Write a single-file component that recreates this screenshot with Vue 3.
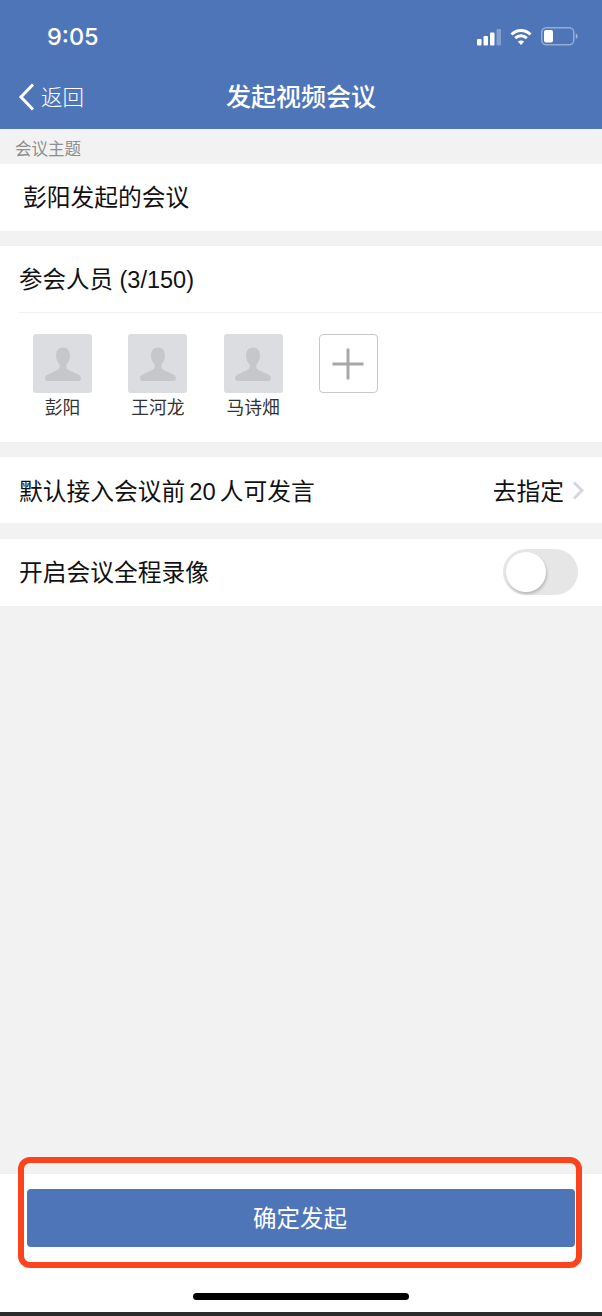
<script setup>
const people = ['彭阳', '王河龙', '马诗畑']
</script>

<template>
  <div class="page">
    <header class="top">
      <div class="status">
        <span class="time">9:05</span>
        <div class="status-icons">
          <svg width="24" height="18" viewBox="0 0 24 18">
            <rect x="0" y="11" width="4.5" height="6.5" rx="1" fill="#fff" />
            <rect x="6.5" y="8" width="4.5" height="9.5" rx="1" fill="#fff" />
            <rect x="13" y="4.5" width="4.5" height="13" rx="1" fill="#fff" />
            <rect x="19.5" y="1" width="4.5" height="16.5" rx="1" fill="#fff" opacity=".3" />
          </svg>
          <svg width="22" height="18" viewBox="0 0 22 18" fill="none" stroke="#fff" stroke-width="3">
            <path d="M1.5 6.5 C7 1.2 15 1.2 20.5 6.5" />
            <path d="M5.2 10.2 C8.6 7 13.4 7 16.8 10.2" />
            <path d="M11 17 L7.8 13.6 C9.6 12.2 12.4 12.2 14.2 13.6 Z" fill="#fff" stroke="none" />
          </svg>
          <svg width="37" height="19" viewBox="0 0 37 19">
            <rect x=".75" y=".75" width="32" height="17" rx="4.5" fill="none" stroke="#fff" stroke-opacity=".4" stroke-width="1.5" />
            <rect x="3" y="3" width="9" height="12.5" rx="2" fill="#fff" />
            <path d="M34.8 6.5 C36 7 36.6 8 36.6 9.3 C36.6 10.6 36 11.6 34.8 12 Z" fill="#fff" fill-opacity=".45" />
          </svg>
        </div>
      </div>
      <nav class="nav">
        <div class="back">
          <svg width="18" height="28" viewBox="0 0 18 28" fill="none" stroke="#fff" stroke-width="3">
            <path d="M15 1.5 L3 14 L15 26.5" />
          </svg>
          <span class="back-text">返回</span>
        </div>
        <h1 class="title">发起视频会议</h1>
      </nav>
    </header>

    <main class="body">
      <div class="label">会议主题</div>
      <div class="panel subject">彭阳发起的会议</div>

      <section class="panel members">
        <div class="members-head">参会人员 (3/150)</div>
        <div class="people">
          <div v-for="name in people" :key="name" class="person">
            <div class="avatar">
              <svg width="38" height="38" viewBox="0 0 38 38">
                <path d="M19 2.5 C14.6 2.5 12 5.8 12 10.5 C12 14.5 13.6 17.5 15.6 19.6 L15.6 22.5 C15.6 24.5 11 26 7 28 C4 29.4 1.2 30.6 1 33 C1 35 2 36 3.6 36 L34.4 36 C36 36 37 35 37 33 C36.8 30.6 34 29.4 31 28 C27 26 22.4 24.5 22.4 22.5 L22.4 19.6 C24.4 17.5 26 14.5 26 10.5 C26 5.8 23.4 2.5 19 2.5 Z" fill="#c6c7ca" />
              </svg>
            </div>
            <span class="name">{{ name }}</span>
          </div>
          <div class="person">
            <div class="add">
              <svg width="32" height="32" viewBox="0 0 32 32" stroke="#a8a8a8" stroke-width="3">
                <path d="M16 .5 V31.5 M.5 16 H31.5" />
              </svg>
            </div>
          </div>
        </div>
      </section>

      <div class="panel row row-speak">
        <span class="row-text speak-text">默认接入会议前 20 人可发言</span>
        <div class="row-right">
          <span class="row-text">去指定</span>
          <svg class="chevron" width="12" height="19" viewBox="0 0 12 19" fill="none" stroke="#d6d6de" stroke-width="3">
            <path d="M2 1.5 L10 9.5 L2 17.5" />
          </svg>
        </div>
      </div>

      <div class="panel row row-record">
        <span class="row-text">开启会议全程录像</span>
        <div class="switch"><div class="knob"></div></div>
      </div>
    </main>

    <footer class="bottom">
      <button class="confirm">确定发起</button>
      <div class="home-bar"></div>
      <div class="highlight"></div>
    </footer>
    <div class="edge"></div>
  </div>
</template>

<style scoped>
.page {
  width: 602px;
  height: 1316px;
  display: flex;
  flex-direction: column;
  background: #f2f2f2;
  font-family: "Liberation Sans", "Noto Sans CJK SC", sans-serif;
  color: #111;
  overflow: hidden;
}

.top {
  height: 129px;
  flex: none;
  background: #4f75b9;
  color: #fff;
}
.status {
  height: 68px;
  display: flex;
  justify-content: space-between;
  align-items: center;
  padding: 5px 24px 0 47px;
  box-sizing: border-box;
}
.time {
  font-family: Inter, "Liberation Sans", sans-serif;
  font-size: 23.5px;
  font-weight: 500;
}
.status-icons {
  display: flex;
  align-items: center;
  gap: 9px;
}

.nav {
  position: relative;
  height: 58px;
  display: flex;
  align-items: center;
  justify-content: center;
}
.back {
  position: absolute;
  left: 18px;
  top: 14px;
  display: flex;
  align-items: center;
  gap: 5px;
  font-size: 21.5px;
  line-height: 28px;
  font-weight: 300;
}
.back-text {
  padding-top: 2px;
}
.title {
  margin: 0 0 1px;
  font-size: 25px;
  line-height: 34px;
  font-weight: 500;
}

.body {
  flex: 1;
}
.label {
  height: 35px;
  line-height: 40px;
  padding-left: 15px;
  font-size: 16.5px;
  color: #8e8e8e;
}
.panel {
  background: #fff;
}
.subject {
  height: 67px;
  line-height: 67px;
  padding-left: 23px;
  font-size: 23.75px;
  margin-bottom: 15px;
}

.members {
  height: 196px;
  margin-bottom: 15px;
}
.members-head {
  height: 66px;
  line-height: 68px;
  margin-left: 19px;
  border-bottom: 1px solid #f2f2f2;
  font-size: 23.5px;
}
.people {
  display: flex;
  gap: 36.33px;
  padding: 21px 0 0 33px;
}
.person {
  width: 59px;
  display: flex;
  flex-direction: column;
  align-items: center;
}
.avatar,
.add {
  width: 59px;
  height: 59px;
  box-sizing: border-box;
  display: flex;
  align-items: center;
  justify-content: center;
  border-radius: 3px;
}
.avatar {
  background: #dcdde0;
}
.add {
  border: 1px solid #c8c8c8;
  border-radius: 4px;
  background: #fff;
}
.name {
  margin-top: 3px;
  font-size: 17.75px;
  line-height: 25px;
  white-space: nowrap;
  color: #333;
}

.row {
  height: 67px;
  display: flex;
  align-items: center;
  justify-content: space-between;
  padding: 0 24px 0 19px;
  box-sizing: border-box;
}
.row-speak {
  height: 66px;
  margin-bottom: 16px;
  padding-right: 18px;
  padding-bottom: 2px;
}
.row-record {
  padding-bottom: 4px;
}
.row-text {
  font-size: 23.75px;
}
.speak-text {
  word-spacing: -2.5px;
}
.row-right {
  display: flex;
  align-items: center;
  gap: 8px;
}
.chevron {
  margin-top: 2px;
}
.switch {
  width: 75px;
  height: 46px;
  margin-top: 2px;
  border-radius: 23px;
  background: #e6e6e6;
  position: relative;
}
.knob {
  position: absolute;
  left: 3px;
  top: 3px;
  width: 40px;
  height: 40px;
  border-radius: 50%;
  background: #fff;
  box-shadow: 1px 2px 3px rgba(0, 0, 0, .2);
}

.bottom {
  position: relative;
  height: 138px;
  flex: none;
  background: #fff;
}
.confirm {
  display: block;
  width: 548px;
  height: 58px;
  margin: 15px 0 0 27px;
  padding: 0 2px 2px 0;
  border: none;
  border-radius: 4px;
  background: #4f75b9;
  color: #fff;
  font-family: inherit;
  font-size: 23.5px;
}
.home-bar {
  width: 216px;
  height: 7px;
  margin: 46px 0 0 193px;
  border-radius: 4px;
  background: #000;
}
.highlight {
  position: absolute;
  left: 18px;
  top: -17px;
  width: 564px;
  height: 111px;
  box-sizing: border-box;
  border: 6px solid #fb431c;
  border-radius: 12px;
  pointer-events: none;
}
.edge {
  height: 4px;
  flex: none;
  background: #2b2b2b;
}
</style>
